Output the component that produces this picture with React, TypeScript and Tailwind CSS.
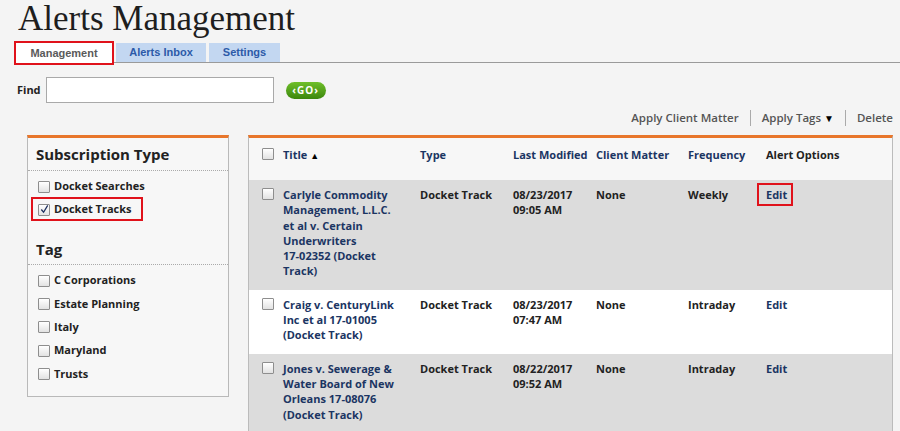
import React from "react";

interface Alert {
  id: number;
  title: string;
  type: string;
  date: string;
  time: string;
  clientMatter: string;
  frequency: string;
  highlight?: boolean;
}

const alerts: Alert[] = [
  {
    id: 1,
    title: "Carlyle Commodity Management, L.L.C. et al v. Certain Underwriters 17-02352 (Docket Track)",
    type: "Docket Track",
    date: "08/23/2017",
    time: "09:05 AM",
    clientMatter: "None",
    frequency: "Weekly",
    highlight: true,
  },
  {
    id: 2,
    title: "Craig v. CenturyLink Inc et al 17-01005 (Docket Track)",
    type: "Docket Track",
    date: "08/23/2017",
    time: "07:47 AM",
    clientMatter: "None",
    frequency: "Intraday",
  },
  {
    id: 3,
    title: "Jones v. Sewerage & Water Board of New Orleans 17-08076 (Docket Track)",
    type: "Docket Track",
    date: "08/22/2017",
    time: "09:52 AM",
    clientMatter: "None",
    frequency: "Intraday",
  },
];

const tags = ["C Corporations", "Estate Planning", "Italy", "Maryland", "Trusts"];

// keep docket numbers like 17-02352 on one line (word joiner after the hyphen)
const noBreak = (title: string) => title.replace(/(\d)-(\d)/g, "$1-\u2060$2");

const Checkbox = ({ checked = false }: { checked?: boolean }) => (
  <span className="relative inline-block h-[12px] w-[12px] shrink-0 rounded-[1px] border border-[#8e8e8e] bg-gradient-to-b from-white to-[#e2e2e2]">
    {checked && (
      <svg viewBox="0 0 12 12" className="absolute left-[0px] top-[-1px] h-[11px] w-[11px]">
        <path d="M2.5 6 L5 9 L9.5 1.5" fill="none" stroke="#1d2f5e" strokeWidth="1.4" />
      </svg>
    )}
  </span>
);

const RedBox = ({ className }: { className: string }) => (
  <span className={`pointer-events-none absolute border-2 border-[#e0121b] ${className}`} />
);

export default function App() {
  return (
    <div className="h-[431px] overflow-hidden bg-[#f4f4f4] font-['Open_Sans',sans-serif] text-[#222]">
      {/* Title */}
      <h1 className="pl-[18px] font-['Liberation_Serif',serif] text-[35px] leading-[38px] text-[#1e1e1e]">
        Alerts Management
      </h1>

      {/* Tabs */}
      <div className="mt-[3px] flex h-[24px] font-['Liberation_Sans',sans-serif]">
        <div className="ml-[14px] flex w-[100px] items-center justify-center border-2 border-[#e0121b] bg-white text-[11px] font-bold text-[#5a5a5a]">
          Management
        </div>
        <div className="mb-[2px] flex flex-1 items-end border-b border-[#9a9a9a]">
          <div className="ml-[2px] flex h-[19px] w-[90px] items-center justify-center bg-[#c3d7f1] text-[11px] font-bold text-[#2c5aa8]">
            Alerts Inbox
          </div>
          <div className="ml-[3px] flex h-[19px] w-[71px] items-center justify-center bg-[#c3d7f1] text-[11px] font-bold text-[#2c5aa8]">
            Settings
          </div>
        </div>
      </div>

      {/* Find */}
      <div className="mt-[12px] flex items-center pl-[17px]">
        <span className="text-[11px] font-bold">Find</span>
        <input className="ml-[5px] h-[26px] w-[228px] border border-[#a9a9a9] bg-white" />
        <button className="ml-[12px] h-[17px] w-[40px] rounded-full bg-gradient-to-b from-[#6fbf2a] to-[#3b870b] text-[10px] font-bold leading-[17px] tracking-[1px] text-white">
          ‹GO›
        </button>
      </div>

      {/* Actions */}
      <div className="mt-[5px] flex h-[20px] items-center justify-end pr-[7px] text-[11.5px] font-semibold text-[#555]">
        <span>Apply Client Matter</span>
        <span className="mx-[11px] h-[16px] w-px bg-[#aaa]" />
        <span>
          Apply Tags <span className="text-[10px] text-black">▼</span>
        </span>
        <span className="mx-[11px] h-[16px] w-px bg-[#aaa]" />
        <span>Delete</span>
      </div>

      <div className="mt-[7px] flex items-start">
        {/* Filters */}
        <div className="ml-[27px] w-[202px] border border-t-[3px] border-[#b9b9b9] border-t-[#e8762b] bg-[#f7f7f7]">
          <div className="border-b border-dotted border-[#aaa] px-[8px] pb-[6px] pt-[6px] text-[15px] font-bold leading-[20px]">
            Subscription Type
          </div>
          <div className="pt-[4px] text-[11px] font-bold">
            <div className="flex h-[23px] items-center gap-[4px] pl-[10px]">
              <Checkbox />
              <span>Docket Searches</span>
            </div>
            <div className="flex h-[23px] items-center gap-[4px] pl-[10px]">
              <Checkbox checked />
              <span className="relative">
                Docket Tracks
                <RedBox className="-left-[23px] -right-[11px] -top-[4px] -bottom-[3px]" />
              </span>
            </div>
          </div>
          <div className="mt-[18px] border-b border-dotted border-[#aaa] px-[8px] pb-[5px] text-[15px] font-bold leading-[20px]">
            Tag
          </div>
          <div className="pb-[11px] pt-[4px] text-[11px] font-bold">
            {tags.map((tag) => (
              <div key={tag} className="flex h-[23.3px] items-center gap-[4px] pl-[10px]">
                <Checkbox />
                <span>{tag}</span>
              </div>
            ))}
          </div>
        </div>

        {/* Results */}
        <div className="ml-[19px] w-[645px] border-x border-t-[3px] border-[#bbb] border-t-[#e8762b]">
          <table className="w-full table-fixed border-collapse text-left text-[11px] font-bold leading-[15.3px]">
            <colgroup>
              <col className="w-[31px]" />
              <col className="w-[137px]" />
              <col className="w-[93px]" />
              <col className="w-[83px]" />
              <col className="w-[92px]" />
              <col className="w-[78px]" />
              <col />
            </colgroup>
            <thead className="bg-[#f7f7f7]">
              <tr className="h-[42px] align-top text-[#1b3563]">
                <th className="pl-[13px] pt-[10px]">
                  <Checkbox />
                </th>
                <th className="whitespace-nowrap pl-[3px] pt-[9px]">
                  Title <span className="text-[9px] text-black">▲</span>
                </th>
                <th className="whitespace-nowrap pl-[3px] pt-[9px]">Type</th>
                <th className="whitespace-nowrap pl-[3px] pt-[9px]">Last Modified</th>
                <th className="whitespace-nowrap pl-[3px] pt-[9px]">Client Matter</th>
                <th className="whitespace-nowrap pl-[3px] pt-[9px]">Frequency</th>
                <th className="whitespace-nowrap pl-[3px] pt-[9px] text-[#222]">Alert Options</th>
              </tr>
            </thead>
            <tbody>
              {alerts.map((alert, i) => (
                <tr
                  key={alert.id}
                  className={`align-top ${i % 2 === 0 ? "bg-[#dcdcdc]" : "bg-white"}`}
                >
                  <td className="pb-[11px] pl-[13px] pt-[8px]">
                    <Checkbox />
                  </td>
                  <td className="pb-[11px] pl-[3px] pr-[16px] pt-[7px] text-[#1b3563]">
                    {noBreak(alert.title)}
                  </td>
                  <td className="pb-[11px] pl-[3px] pt-[7px]">{alert.type}</td>
                  <td className="pb-[11px] pl-[3px] pt-[7px]">
                    {alert.date}
                    <br />
                    {alert.time}
                  </td>
                  <td className="pb-[11px] pl-[3px] pt-[7px]">{alert.clientMatter}</td>
                  <td className="pb-[11px] pl-[3px] pt-[7px]">{alert.frequency}</td>
                  <td className="pb-[11px] pl-[3px] pt-[7px] text-[#1b3563]">
                    <span className="relative">
                      Edit
                      {alert.highlight && (
                        <RedBox className="-left-[9px] -right-[6px] -top-[4px] -bottom-[4px]" />
                      )}
                    </span>
                  </td>
                </tr>
              ))}
            </tbody>
          </table>
        </div>
      </div>
    </div>
  );
}
